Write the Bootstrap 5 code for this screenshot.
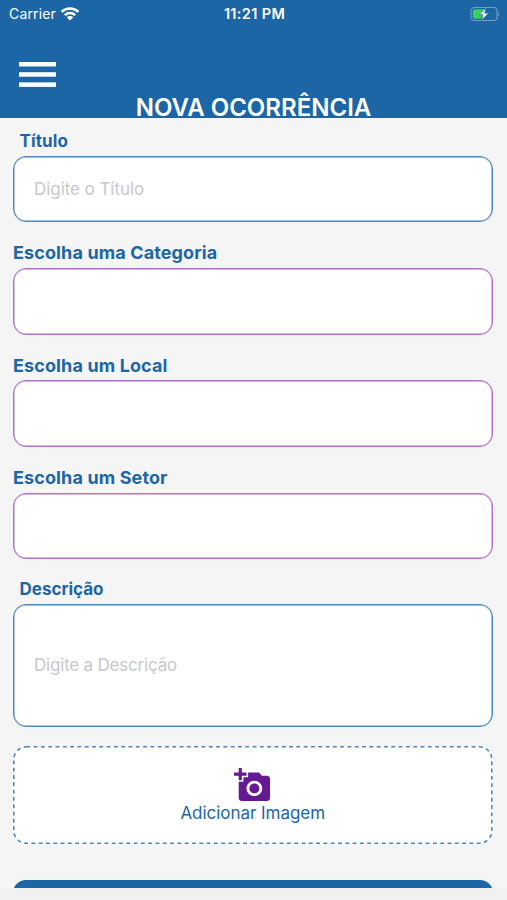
<!DOCTYPE html>
<html lang="pt-BR">
<head>
<meta charset="utf-8">
<meta name="viewport" content="width=device-width, initial-scale=1">
<title>Nova Ocorrência</title>
<link href="https://cdn.jsdelivr.net/npm/bootstrap@5.3.0/dist/css/bootstrap.min.css" rel="stylesheet">
<style>
:root{--brand:#1d66a5;--plum:#651992;--edge:#4c87bc}
body{font-family:Inter,"Liberation Sans",sans-serif;background:#f5f5f5;color:var(--brand);height:900px;overflow:hidden}
svg{display:block}
.app-header{height:118px;background:var(--brand);color:#fff}
.status-bar{height:28px;padding:0 7px 0 9px;line-height:28px;font-size:14px}
.status-side{flex:1 1 0}
.carrier{letter-spacing:.15px}
.status-time{font-weight:600;font-size:14.5px;letter-spacing:.35px}
.menu-btn{margin:33px 0 0 19px;width:37px;border:0}
.screen-title{font-size:24px;font-weight:600;line-height:26px;margin:7px 0 0;letter-spacing:.02px}
.form-area{height:770px;padding:0 14.5px 0 13px;overflow:hidden}
.field-label{font-weight:700;font-size:18px;line-height:22px;height:22px;margin:0 0 3.8px;letter-spacing:.12px;white-space:nowrap;display:block}
.label-inset{padding-left:6.5px;font-size:17px}
.field-first{padding-top:12px}
.field-row{padding-top:20px}
.field-row.last-row{padding-top:19.3px}
.last-row .field-label{letter-spacing:0}
.field-box.form-control{height:66.5px;border:1px solid var(--edge);box-shadow:inset 0 0 0 .5px var(--edge);border-radius:13px;background:#fff;padding:0 20px;font-size:17px;letter-spacing:-.06px;color:var(--brand)}
.field-box.form-control::placeholder{color:#c8c8ca;opacity:1}
.field-box.pick{--edge:#b070c9}
.field-box.tall.form-control{height:122.5px;padding-bottom:2px;letter-spacing:-.2px}
.upload{height:98px;margin-top:19px;background:#fff;border-radius:13px;border:0;color:var(--brand);padding:22px 0 0}
.upload-text{font-size:17px;line-height:22px;margin-top:1px;letter-spacing:-.04px}
.submit-btn{height:50px;margin-top:36.5px;background:var(--brand);border-radius:13px;border:0}
.bottom-strip{height:12px;background:#f1f1f1}
</style>
</head>
<body>
<header class="app-header">
  <div class="status-bar d-flex align-items-center">
    <div class="status-side d-flex align-items-center">
      <span class="carrier">Carrier</span>
      <svg class="ms-1" width="20" height="16" viewBox="0 0 20 16" fill="none" stroke="#fff" stroke-width="2.5"><path d="M1.6 5.8C6.3 1.4 13.7 1.4 18.4 5.8M4.8 9.1C7.8 6.4 12.2 6.4 15.2 9.1"/><path d="M6.7 11.3C8.6 9.6 11.4 9.6 13.3 11.3L10 14.6Z" fill="#fff" stroke="none"/></svg>
    </div>
    <span class="status-time">11:21 PM</span>
    <div class="status-side d-flex justify-content-end">
      <svg width="30" height="16" viewBox="0 0 30 16"><rect x="1" y="1.5" width="26" height="13" rx="3.5" fill="none" stroke="#6f9fca" stroke-width="1.1"/><path d="M5 3.3H14.5L9.5 9H12.5L11 12.8H5Q2.8 12.8 2.8 10.8V5.3Q2.8 3.3 5 3.3Z" fill="#35d15a"/><path d="M28.2 5.7Q30.5 8 28.2 10.3Z" fill="#6f9fca"/><path d="M16 2L9.2 8.6H13L11.7 14L18.4 7.2H14.6Z" fill="#fff" stroke="#1d66a5" stroke-width=".5"/></svg>
    </div>
  </div>
  <button class="menu-btn btn p-0 d-block" type="button" aria-label="Menu">
    <svg width="37" height="27" viewBox="0 0 37 27" fill="#fff"><rect y="1" width="37" height="4.5"/><rect y="11.2" width="37" height="4.5"/><rect y="21.4" width="37" height="4.5"/></svg>
  </button>
  <h1 class="screen-title text-center">NOVA OCORRÊNCIA</h1>
</header>

<main class="form-area">
  <form>
    <div class="field-first"><label class="field-label label-inset" for="titulo">Título</label>
    <input id="titulo" class="form-control field-box" placeholder="Digite o Título"></div>
    <div class="field-row"><label class="field-label" for="categoria">Escolha uma Categoria</label>
    <input id="categoria" class="form-control field-box pick"></div>
    <div class="field-row"><label class="field-label" for="local">Escolha um Local</label>
    <input id="local" class="form-control field-box pick"></div>
    <div class="field-row"><label class="field-label" for="setor">Escolha um Setor</label>
    <input id="setor" class="form-control field-box pick"></div>
    <div class="field-row last-row"><label class="field-label label-inset" for="descricao">Descrição</label>
    <input id="descricao" class="form-control field-box tall" placeholder="Digite a Descrição"></div>
    <button class="upload btn w-100 position-relative d-flex flex-column align-items-center" type="button">
      <svg class="position-absolute top-0 start-0" width="480" height="98" fill="none"><rect x=".8" y=".8" width="478" height="96.4" rx="12.5" stroke="#4c87bc" stroke-width="1.6" stroke-dasharray="3.9 3.4"/></svg>
      <svg width="37" height="33" viewBox="0 0 23.6 21.5" preserveAspectRatio="none" fill="#651992"><path d="M3 3V0h2v3h3v2H5v3H3V5H0V3h3zm3 6V6h3V3h7l1.83 2H21c1.1 0 2 .9 2 2v12.5c0 1.1-.9 2-2 2H5c-1.1 0-2-.9-2-2V9h3zm7 9.3c2.76 0 5-2.24 5-5s-2.24-5-5-5-5 2.24-5 5 2.24 5 5 5zm-3.2-5c0 1.77 1.43 3.2 3.2 3.2s3.2-1.43 3.2-3.2-1.43-3.2-3.2-3.2-3.2 1.43-3.2 3.2z"/></svg>
      <span class="upload-text">Adicionar Imagem</span>
    </button>
    <button class="submit-btn btn w-100 d-block" type="submit" aria-label="Enviar"></button>
  </form>
</main>
<div class="bottom-strip"></div>
<script src="https://cdn.jsdelivr.net/npm/bootstrap@5.3.0/dist/js/bootstrap.bundle.min.js"></script>
</body>
</html>
